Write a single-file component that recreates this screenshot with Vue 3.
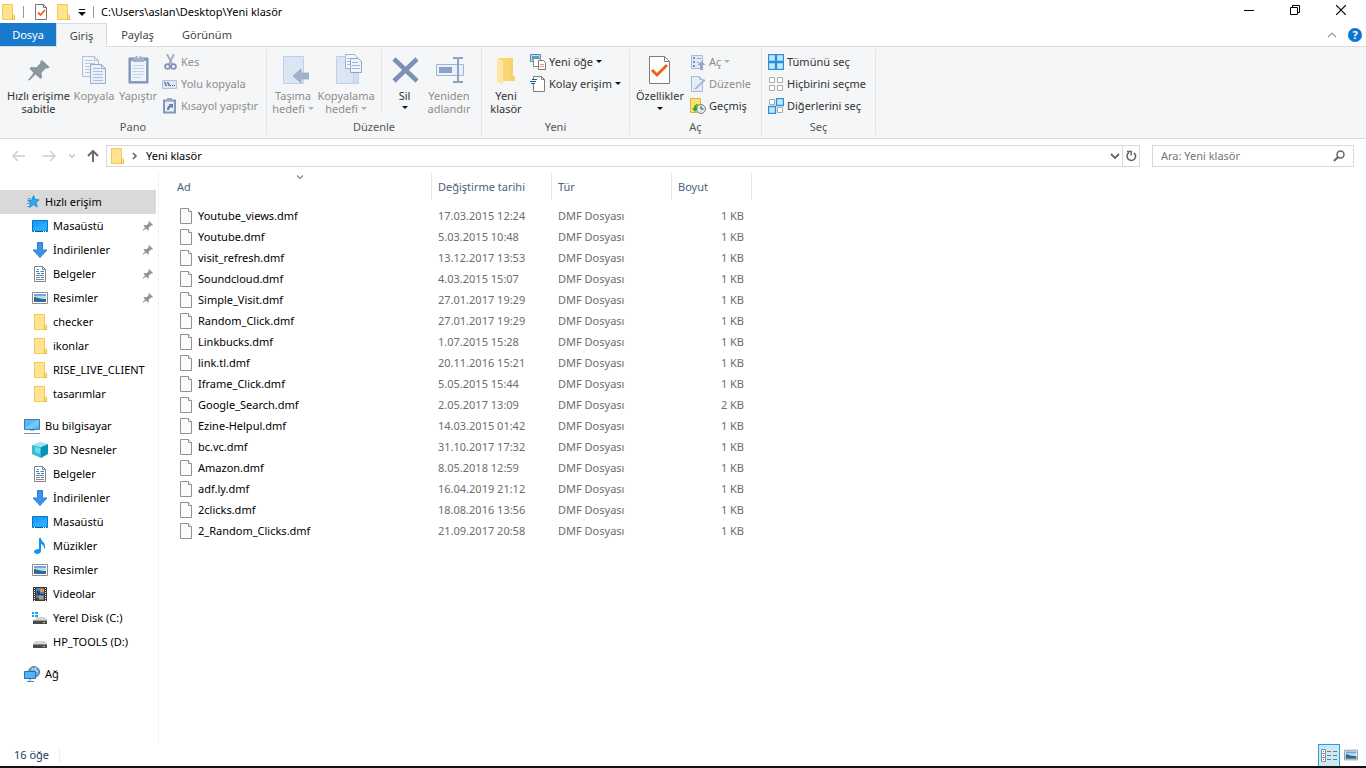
<script setup>
const quickAccess = [
  { icon: 'desktop', label: 'Masaüstü', pinned: true },
  { icon: 'download', label: 'İndirilenler', pinned: true },
  { icon: 'document', label: 'Belgeler', pinned: true },
  { icon: 'picture', label: 'Resimler', pinned: true },
  { icon: 'folder', label: 'checker' },
  { icon: 'folder', label: 'ikonlar' },
  { icon: 'folder', label: 'RISE_LIVE_CLIENT' },
  { icon: 'folder', label: 'tasarımlar' }
]

const computer = [
  { icon: 'cube', label: '3D Nesneler' },
  { icon: 'document', label: 'Belgeler' },
  { icon: 'download', label: 'İndirilenler' },
  { icon: 'desktop', label: 'Masaüstü' },
  { icon: 'music', label: 'Müzikler' },
  { icon: 'picture', label: 'Resimler' },
  { icon: 'video', label: 'Videolar' },
  { icon: 'sysdisk', label: 'Yerel Disk (C:)' },
  { icon: 'disk', label: 'HP_TOOLS (D:)' }
]

const sections = [
  { icon: 'star', label: 'Hızlı erişim', selected: true, items: quickAccess },
  { icon: 'computer', label: 'Bu bilgisayar', items: computer },
  { icon: 'network', label: 'Ağ', items: [] }
]

const files = [
  ['Youtube_views.dmf', '17.03.2015 12:24', '1 KB'],
  ['Youtube.dmf', '5.03.2015 10:48', '1 KB'],
  ['visit_refresh.dmf', '13.12.2017 13:53', '1 KB'],
  ['Soundcloud.dmf', '4.03.2015 15:07', '1 KB'],
  ['Simple_Visit.dmf', '27.01.2017 19:29', '1 KB'],
  ['Random_Click.dmf', '27.01.2017 19:29', '1 KB'],
  ['Linkbucks.dmf', '1.07.2015 15:28', '1 KB'],
  ['link.tl.dmf', '20.11.2016 15:21', '1 KB'],
  ['Iframe_Click.dmf', '5.05.2015 15:44', '1 KB'],
  ['Google_Search.dmf', '2.05.2017 13:09', '2 KB'],
  ['Ezine-Helpul.dmf', '14.03.2015 01:42', '1 KB'],
  ['bc.vc.dmf', '31.10.2017 17:32', '1 KB'],
  ['Amazon.dmf', '8.05.2018 12:59', '1 KB'],
  ['adf.ly.dmf', '16.04.2019 21:12', '1 KB'],
  ['2clicks.dmf', '18.08.2016 13:56', '1 KB'],
  ['2_Random_Clicks.dmf', '21.09.2017 20:58', '1 KB']
]

const groups = [
  {
    name: 'Pano', cls: 'g-pano',
    large: [
      { icon: 'bigpin', lines: ['Hızlı erişime', 'sabitle'], cls: 'w67' },
      { icon: 'copy', lines: ['Kopyala'], cls: 'w44', off: true },
      { icon: 'paste', lines: ['Yapıştır'], cls: 'w44', off: true }
    ],
    small: [
      { icon: 'cut', label: 'Kes', off: true },
      { icon: 'path', label: 'Yolu kopyala', off: true },
      { icon: 'pastelink', label: 'Kısayol yapıştır', off: true }
    ]
  },
  {
    name: 'Düzenle', cls: 'g-duzenle',
    large: [
      { icon: 'moveto', lines: ['Taşıma', 'hedefi'], arrow: 'inline', cls: 'w52', off: true },
      { icon: 'copyto', lines: ['Kopyalama', 'hedefi'], arrow: 'inline', cls: 'w54', off: true },
      { icon: 'delete', lines: ['Sil'], arrow: 'below', cls: 'w46 divided' },
      { icon: 'rename', lines: ['Yeniden', 'adlandır'], cls: 'w44', off: true }
    ],
    small: []
  },
  {
    name: 'Yeni', cls: 'g-yeni',
    large: [{ icon: 'bigfolder', lines: ['Yeni', 'klasör'], cls: 'w48' }],
    small: [
      { icon: 'newitem', label: 'Yeni öğe', arrow: true },
      { icon: 'easy', label: 'Kolay erişim', arrow: true }
    ]
  },
  {
    name: 'Aç', cls: 'g-ac',
    large: [{ icon: 'props', lines: ['Özellikler'], arrow: 'below', cls: 'w60' }],
    small: [
      { icon: 'open', label: 'Aç', arrow: true, off: true },
      { icon: 'edit', label: 'Düzenle', off: true },
      { icon: 'history', label: 'Geçmiş' }
    ]
  },
  {
    name: 'Seç', cls: 'g-sec',
    large: [],
    small: [
      { icon: 'selall', label: 'Tümünü seç' },
      { icon: 'selnone', label: 'Hiçbirini seçme' },
      { icon: 'selinv', label: 'Diğerlerini seç' }
    ]
  }
]
</script>

<template>
  <svg class="sprite" aria-hidden="true">
    <symbol id="i-folder" viewBox="-1 0 16 16">
      <path d="M1.500.5h10v11l2 1v3h-12z" fill="#ffe391" stroke="#f3cb52" />
      <path d="M11.500 15.500v-4l1-1 1 1v4z" fill="#ffe9a6" stroke="#e9bd3c" />
    </symbol>
    <symbol id="i-check" viewBox="0 0 16 16">
      <path d="M2.500.5h8l3 3v12h-11z" fill="#fff" stroke="#777" />
      <path d="M10.500.5v3h3" fill="none" stroke="#777" />
      <path d="M5 8.500l2.500 2.500 4.500-5" fill="none" stroke="#f1601f" stroke-width="1.800" />
    </symbol>
    <symbol id="i-file" viewBox="0 0 16 16">
      <path d="M2.500.5h8l3 3v12h-11z" fill="#fbfbfb" stroke="#929292" />
      <path d="M10.500.5v3h3" fill="#fff" stroke="#929292" />
    </symbol>
    <symbol id="i-star" viewBox="0 0 16 16">
      <path d="M9.500 1.500l1.600 4 4 .3-3.100 2.600 1.200 4.600-3.700-2.400-4 2.900 1.200-4.500-3-2.700 4.200-.3z" fill="#28a8f5" stroke="#1580d1" stroke-width=".8" />
      <path d="M4 4.500h3M3 9.500h3M3 12.500h2" stroke="#4b9fdb" stroke-width="1" />
    </symbol>
    <symbol id="i-desktop" viewBox="0 0 16 16">
      <path d="M.5 2.500h15v11h-15z" fill="#18a0fb" stroke="#0876c9" />
      <path d="M1 10L15 4v8H1z" fill="#4ab8ff" opacity=".4" />
      <path d="M1 13.500h14" stroke="#075a9c" /><path d="M2 13.500h1M11 13.500h1M13 13.500h1" stroke="#fff" />
    </symbol>
    <symbol id="i-download" viewBox="0 0 16 16">
      <path d="M5.500.5h5v7.500h4.500l-7 7.500-7-7.500h4.500z" fill="#3994e6" stroke="#2c7fcb" />
    </symbol>
    <symbol id="i-document" viewBox="0 0 16 16">
      <path d="M2.500.5h8l3 3v12h-11z" fill="#fff" stroke="#858585" />
      <path d="M10.500.5v3h3" fill="none" stroke="#858585" />
      <path d="M4 9.500h8M4 13.500h8M4 11.500h4" stroke="#888" />
      <path d="M5 3.500h2M4 5.500h3M8.500 5.500h3.500M9 7.500h3M5 7.500h3M9 11.500h3" stroke="#2684cf" />
    </symbol>
    <symbol id="i-picture" viewBox="0 0 16 16">
      <path d="M.5 2.500h15v11h-15z" fill="#fff" stroke="#8b8b8b" />
      <path d="M2 4h12v8H2z" fill="#b7dcf4" /><path d="M2 4h12v2H2z" fill="#6aa8e8" />
      <path d="M2 7c3 0 4 2 12 2v3H2z" fill="#366a75" /><path d="M2 10.500h12v1.500H2z" fill="#2c6cb0" />
    </symbol>
    <symbol id="i-computer" viewBox="0 0 16 16">
      <path d="M.5 1.500h15v10h-15z" fill="#58b8f4" stroke="#3c7fae" /><path d="M1 10L13 2h2v5L7 11H1z" fill="#8cd2fb" opacity=".6" />
      <path d="M6 12.500h4" stroke="#9bb" /><path d="M0 15.500h16" stroke="#6f93ac" />
    </symbol>
    <symbol id="i-network" viewBox="0 0 16 16">
      <circle cx="10" cy="6" r="5.500" fill="#6fa9ce" stroke="#4b7898" />
      <path d="M8 2l1 2M12 1l-1 3 3 2" stroke="#b5dcf0" stroke-width="1.500" fill="none" />
      <path d="M.5 5.500h11v7h-11z" fill="#52b5f5" stroke="#2673ad" /><path d="M3 15.500h7M6 13v2" stroke="#4e84aa" />
    </symbol>
    <symbol id="i-cube" viewBox="0 0 16 16">
      <path d="M0 3l8-3 8 2-7 3z" fill="#9fe5ef" /><path d="M0 3l9 2v11l-9-4z" fill="#35bdd2" /><path d="M9 5l7-3v10l-7 4z" fill="#0a8fb5" />
      <path d="M3 5l5 1v6l-5-2z" fill="#73d9e6" />
    </symbol>
    <symbol id="i-music" viewBox="0 0 16 16">
      <path d="M7 0h2c0 4 5 4 4 10l-1 1c0-4-1-4-3-5v7c0 2-2 3-4 3s-3-1-3-2.500S4 11 7 11z" fill="#1793ec" />
    </symbol>
    <symbol id="i-video" viewBox="0 0 16 16">
      <path d="M1 1h14v14H1z" fill="#3a3a3a" /><path d="M4 2h8v6H4zM4 9h8v5H4z" fill="#4a7fd0" />
      <path d="M8 3h4v3H8zM7 10h4v3H7z" fill="#d99b2b" /><path d="M5 5h3v3H5zM4 12h3v2H4z" fill="#304c37" />
      <path d="M2.500 2v13M13.500 2v13" stroke="#eee" stroke-dasharray="1 1" />
    </symbol>
    <symbol id="i-disk" viewBox="0 0 16 16">
      <path d="M3 7h10l2 3H1z" fill="#d6d6d6" /><path d="M1 10h14v4H1z" fill="#4a4a4a" /><path d="M1 10.500h14" stroke="#8c8c8c" /><path d="M11 12.500h2" stroke="#72ec61" />
    </symbol>
    <symbol id="i-sysdisk" viewBox="0 0 16 16">
      <path d="M5 7h8l2 3H2z" fill="#d6d6d6" /><path d="M1 10h14v4H1z" fill="#4a4a4a" /><path d="M1 10.500h14" stroke="#999" /><path d="M11 12.500h2" stroke="#72ec61" />
      <path d="M0 2h2v2H0zM3 2h3v2H3zM0 5h2v2H0zM3 5h3v2H3z" fill="#16a4f5" />
    </symbol>
    <symbol id="i-pin" viewBox="0 0 12 12">
      <path d="M7 1l4 4-1 .8-1-.3L7 7.500l-.3 2.500-.7.500L4 8.500 1 11l-.5-.5L3 7.500 1.500 5.500l.8-.6 2.500.1L6.800 3 6.400 2z" fill="#8c979f" />
    </symbol>
    <symbol id="i-bigpin" viewBox="0 0 32 32">
      <path d="M19 6l7.500 7-1.500 1.500-2-.3-4.500 4.500.5 4.800-1.500 1.500-5-4.500-6 6-1.500-.5 5.500-7-4-4.500 1.500-1.500 5.500.3 4-4.300-.2-1.800z" fill="#8b979e" />
    </symbol>
    <symbol id="i-copy" viewBox="0 0 32 32">
      <path d="M4.500 2.500h12l4 4v16h-16z" fill="#f1f5fb" stroke="#aebfd9" /><path d="M16.500 2.500v4h4" fill="none" stroke="#aebfd9" />
      <path d="M7 6.500h8M7 9.500h10M7 12.500h10M7 15.500h8M7 18.500h8" stroke="#b5c8e0" />
      <path d="M12.500 10.500h11l4 4v15h-15z" fill="#e9f0f9" stroke="#97acc9" /><path d="M23.500 10.500v4h4" fill="none" stroke="#97acc9" />
      <path d="M15 14.500h7M15 17.500h10M15 20.500h10M15 23.500h10M15 26.500h10" stroke="#abc0dc" />
    </symbol>
    <symbol id="i-paste" viewBox="0 0 32 32">
      <path d="M7 4h19v25H7z" fill="#8ba0be" stroke="#7890b2" /><path d="M9 7h15v20H9z" fill="#edf3fa" />
      <path d="M11 4h2l1-2h5l1 2h2v4H11z" fill="#a5b1c3" /><circle cx="16.500" cy="3" r="1" fill="#fff" />
      <path d="M11 11.500h11M11 14.500h11M11 17.500h11M11 20.500h11M11 23.500h8" stroke="#c4d3e6" />
    </symbol>
    <symbol id="i-cut" viewBox="0 0 16 16">
      <path d="M5 0l5 10M12 0L7 10" stroke="#9cacc3" stroke-width="1.700" /><circle cx="5.500" cy="12.500" r="2.400" fill="none" stroke="#8195b5" stroke-width="1.800" /><circle cx="11.500" cy="12.500" r="2.400" fill="none" stroke="#8195b5" stroke-width="1.800" />
    </symbol>
    <symbol id="i-path" viewBox="0 0 16 16">
      <path d="M.5 4.500h14v8H.5z" fill="#dce7f4" stroke="#afc0d8" /><path d="M2.500 6l2 4M5.500 6l2 4" stroke="#536b90" stroke-width="1.300" /><path d="M8 9.500h1M10 9.500h1M12 9.500h1" stroke="#536b90" />
    </symbol>
    <symbol id="i-pastelink" viewBox="0 0 16 16">
      <path d="M2 2.500h11v12H2z" fill="#e6eef8" stroke="#8499b9" stroke-width="2" /><path d="M5 0h5v3H5z" fill="#9aa9bf" />
      <path d="M5 12c0-3 1-4 3-5L6.500 6H11v4.500L9.500 9C7.500 10 7 11 7 12z" fill="#677fa8" />
    </symbol>
    <symbol id="i-moveto" viewBox="0 0 32 32">
      <path d="M6.500 2.500h20v27h-20z" fill="#dbe6f4" stroke="#c0d0e6" /><path d="M16 22l8-7v4h8v6h-8v4z" fill="#9fb1cb" stroke="#93a7c4" stroke-width=".7" />
    </symbol>
    <symbol id="i-copyto" viewBox="0 0 32 32">
      <path d="M6.500 2.500h17v27h-17z" fill="#dbe6f4" stroke="#c0d0e6" /><path d="M23.500 18.500h5v11h-5z" fill="#d0def0" stroke="#c0d0e6" />
      <path d="M15.500.5h9l3 3v11h-12z" fill="#f3f7fc" stroke="#9fb1cb" /><path d="M20.500 4.500h8l3 3v11h-11z" fill="#eff5fc" stroke="#8fa4c3" />
      <path d="M17 4.500h3M17 7.500h3M17 10.500h3M22 8.500h6M22 11.500h8M22 14.500h8" stroke="#a4b8d4" />
    </symbol>
    <symbol id="i-delete" viewBox="0 0 32 32">
      <path d="M5 5l23 22M28 5L5 27" stroke="#7d91b3" stroke-width="4.500" />
    </symbol>
    <symbol id="i-rename" viewBox="0 0 32 32">
      <path d="M3.500 10.500h27v11h-27z" fill="#e9f2fb" stroke="#9fb5d3" /><path d="M6 13h13v6H6z" fill="#8ba2c4" />
      <path d="M20 4h4l1 1 1-1h4M25 5v22M20 28h4l1-1 1 1h4" fill="none" stroke="#8da3c5" stroke-width="2" />
    </symbol>
    <symbol id="i-bigfolder" viewBox="0 0 32 32">
      <path d="M7 4h16v18l2 1v4H7z" fill="#f8d677" /><path d="M7 4l6 3v23.500L7 28z" fill="#ffe7a2" /><path d="M20 5h3v17l2 1v4h-5z" fill="#f9d267" />
    </symbol>
    <symbol id="i-newitem" viewBox="0 0 16 16">
      <path d="M.5.5h10v7H.5z" fill="#bcdef2" stroke="#528caf" /><path d="M2 2h7v4H2z" fill="#5a9fc9" />
      <path d="M3.500 4.500h7v8h-7z" fill="#fff" stroke="#8c8c8c" /><path d="M8.500 6.500h5l2 2v7h-7z" fill="#fff" stroke="#777" /><path d="M10 10.500h4M10 12.500h4" stroke="#e59783" />
    </symbol>
    <symbol id="i-easy" viewBox="0 0 16 16">
      <path d="M3.500 3V.5h8l3 3v12h-11V8" fill="#fff" stroke="#7d7d7d" /><path d="M11.500.5v3h3" fill="none" stroke="#7d7d7d" />
      <path d="M2 3.500h5M0 5.500h6M1 7.500h4" stroke="#1d5c96" />
    </symbol>
    <symbol id="i-props" viewBox="0 0 32 32">
      <path d="M5.500 2.500h15l5 5v22h-20z" fill="#fff" stroke="#7b7b7b" /><path d="M20.500 2.500v5h5" fill="none" stroke="#7b7b7b" />
      <path d="M8 16l5 5 10-10" fill="none" stroke="#f2601c" stroke-width="3" />
    </symbol>
    <symbol id="i-open" viewBox="0 0 16 16">
      <path d="M1.500 1.500h11v13h-11z" fill="#e1eaf5" stroke="#a8bad3" /><path d="M3 3h2v2H3zM3 7h2v2H3zM3 11h2v2H3z" fill="#718aaf" /><path d="M7 4.500h4M7 8.500h2" stroke="#91a6c4" />
      <path d="M11.500 7l4 4h-2.500v5h-3v-5H7.500z" fill="#93a6c3" />
    </symbol>
    <symbol id="i-edit" viewBox="0 0 16 16">
      <path d="M1.500.5h8l3 3v12h-11z" fill="#e5edf8" stroke="#a8bad3" /><path d="M9.500.5v3h3" fill="none" stroke="#a8bad3" /><path d="M4 13l10-10 1.500 1.500-9.500 9z" fill="#a5b7d0" />
    </symbol>
    <symbol id="i-history" viewBox="0 0 16 16">
      <path d="M.5.5h10v14H.5z" fill="#ffe078" stroke="#dfb537" /><circle cx="11" cy="11" r="4.500" fill="#e4e9ec" stroke="#818181" />
      <path d="M11 8v3h2.500" fill="none" stroke="#444" /><path d="M2 10h2c0-3 2-4 5-4-2 1-2.500 2-2.500 4H8l-3 4z" fill="#28aa32" />
    </symbol>
    <symbol id="i-selall" viewBox="0 0 16 16">
      <path d="M.5.500h7v7h-7zM8.500.500h7v7h-7zM.5 8.500h7v7h-7zM8.500 8.500h7v7h-7z" fill="#c6e6fc" stroke="#2a91e0" stroke-width="1.400" />
    </symbol>
    <symbol id="i-selnone" viewBox="0 0 16 16">
      <path d="M1.500 1.500h5v5h-5zM9.500 1.500h5v5h-5zM1.500 9.500h5v5h-5zM9.500 9.500h5v5h-5z" fill="#fff" stroke="#aaa" />
    </symbol>
    <symbol id="i-selinv" viewBox="0 0 16 16">
      <path d="M1.500 1.500h5v5h-5zM9.500 9.500h5v5h-5z" fill="#fff" stroke="#aaa" /><path d="M8.500.5h7v7h-7zM.5 8.500h7v7h-7z" fill="#c6e6fc" stroke="#2a91e0" stroke-width="1.400" />
    </symbol>
    <symbol id="i-details" viewBox="0 0 18 14">
      <path d="M1.500.5h4v4h-4zM1.500 4.500h4v4h-4zM1.500 8.500h4v4h-4z" fill="#fff" stroke="#8b8b8b" /><path d="M3 2.500h1M3 6.500h1" stroke="#3674a8" /><path d="M3 10.500h1" stroke="#d33" />
      <path d="M7 2.500h4M13 2.500h4M7 6.500h4M13 6.500h4M7 10.500h4M13 10.500h4" stroke="#777" />
    </symbol>
    <symbol id="i-caret" viewBox="0 0 6 4"><path d="M0 0h6L3 3z" fill="currentColor" /></symbol>
    <symbol id="i-chevron" viewBox="0 0 8 8"><path d="M1 2.500l3 3 3-3" fill="none" stroke="currentColor" stroke-width="1.200" /></symbol>
  </svg>

  <div class="window">
    <header class="titlebar">
      <svg class="ic16"><use href="#i-folder" /></svg>
      <i class="bar"></i>
      <button class="quick q-check" aria-label="Özellikler"><svg class="ic16"><use href="#i-check" /></svg></button>
      <button class="quick q-new" aria-label="Yeni klasör"><svg class="ic16"><use href="#i-folder" /></svg></button>
      <button class="quick q-more" aria-label="Hızlı Erişim Araç Çubuğunu Özelleştir">
        <svg width="8" height="7" viewBox="0 0 8 7"><path d="M1 .5h6" stroke="#111" /><path d="M0 3h8L4 7z" fill="#111" /></svg>
      </button>
      <i class="bar"></i>
      <h1 class="title">C:\Users\aslan\Desktop\Yeni klasör</h1>
      <div class="winbtns">
        <button aria-label="Simge durumuna küçült"><svg width="10" height="10"><path d="M0 5.500h10" stroke="#000" /></svg></button>
        <button aria-label="Önceki boyut"><svg width="10" height="10"><path d="M.5 2.500h7v7h-7zM2.500 2.500v-2h7v7h-2" fill="none" stroke="#000" /></svg></button>
        <button aria-label="Kapat"><svg width="10" height="10"><path d="M0 0l10 10M10 0L0 10" stroke="#000" stroke-width="1.200" /></svg></button>
      </div>
    </header>

    <nav class="tabs">
      <button class="tab file">Dosya</button>
      <button class="tab active">Giriş</button>
      <button class="tab share">Paylaş</button>
      <button class="tab view">Görünüm</button>
      <button class="collapse" aria-label="Şeridi simge durumuna küçült"><svg width="10" height="6"><path d="M1 5l4-4 4 4" fill="none" stroke="#999" stroke-width="1.200" /></svg></button>
      <button class="help" aria-label="Yardım">?</button>
    </nav>

    <section class="ribbon">
      <div v-for="g in groups" :key="g.name" class="group" :class="g.cls">
        <div class="tools">
          <button v-for="b in g.large" :key="b.icon" class="large" :class="[b.cls, { off: b.off }]">
            <svg class="ic32"><use :href="'#i-' + b.icon" /></svg>
            <span v-for="(line, n) in b.lines" :key="line" class="line">{{ line }}<svg v-if="b.arrow === 'inline' && n === 1" class="caret"><use href="#i-caret" /></svg></span>
            <span v-if="b.arrow === 'below'" class="line"><svg class="caret solo"><use href="#i-caret" /></svg></span>
          </button>
          <div v-if="g.small.length" class="stack">
            <button v-for="b in g.small" :key="b.icon" class="small" :class="{ off: b.off }">
              <svg class="ic16"><use :href="'#i-' + b.icon" /></svg>
              <span>{{ b.label }}</span>
              <svg v-if="b.arrow" class="caret"><use href="#i-caret" /></svg>
            </button>
          </div>
        </div>
        <div class="gname">{{ g.name }}</div>
      </div>
    </section>

    <div class="address">
      <button class="nav back" aria-label="Geri"><svg width="14" height="12"><path d="M13 6H1M6 1L1 6l5 5" fill="none" stroke="#ccc" stroke-width="1.400" /></svg></button>
      <button class="nav fwd" aria-label="İleri"><svg width="14" height="12"><path d="M1 6h12M8 1l5 5-5 5" fill="none" stroke="#ccc" stroke-width="1.400" /></svg></button>
      <button class="nav recent" aria-label="Son konumlar"><svg class="chev"><use href="#i-chevron" /></svg></button>
      <button class="nav up" aria-label="Yukarı"><svg width="12" height="14"><path d="M6 13V2M1 7l5-5 5 5" fill="none" stroke="#6b6b6b" stroke-width="2" /></svg></button>
      <div class="crumbs">
        <svg class="ic16"><use href="#i-folder" /></svg>
        <svg class="sep" width="6" height="8"><path d="M1 1l3 3-3 3" fill="none" stroke="#666" stroke-width="1.600" /></svg>
        <button class="crumb">Yeni klasör</button>
        <button class="drop" aria-label="Önceki konumlar"><svg width="10" height="8"><path d="M1 2l4 4 4-4" fill="none" stroke="#666" stroke-width="1.800" /></svg></button>
        <button class="reload" aria-label="Yenile"><svg width="12" height="12"><path d="M4 2.500A4.300 4.300 0 1 0 9 2.800" fill="none" stroke="#666" stroke-width="1.600" /><path d="M2 1.500h4.200v4" fill="none" stroke="#666" stroke-width="1.400" /></svg></button>
      </div>
      <label class="search">
        <input type="search" placeholder="Ara: Yeni klasör" aria-label="Ara: Yeni klasör" />
        <svg width="12" height="12"><circle cx="7.500" cy="4.500" r="3.500" fill="none" stroke="#666" stroke-width="1.500" /><path d="M5 7L1 11" stroke="#666" stroke-width="2" /></svg>
      </label>
    </div>

    <main class="body">
      <aside class="side">
        <div v-for="s in sections" :key="s.label" class="section">
          <a href="#" class="node" :class="{ selected: s.selected }"><svg class="ic16"><use :href="'#i-' + s.icon" /></svg>{{ s.label }}</a>
          <a v-for="n in s.items" :key="n.label" href="#" class="node child">
            <svg class="ic16"><use :href="'#i-' + n.icon" /></svg>{{ n.label }}
            <svg v-if="n.pinned" class="pin"><use href="#i-pin" /></svg>
          </a>
        </div>
      </aside>
      <div class="list">
        <table>
          <thead>
            <tr>
              <th class="c-name">Ad<svg class="sort"><use href="#i-chevron" /></svg></th>
              <th class="c-date">Değiştirme tarihi</th>
              <th class="c-type">Tür</th>
              <th class="c-size">Boyut</th>
            </tr>
          </thead>
          <tbody>
            <tr v-for="f in files" :key="f[0]">
              <td class="first"><div class="fname"><svg class="ic16"><use href="#i-file" /></svg>{{ f[0] }}</div></td>
              <td>{{ f[1] }}</td>
              <td>DMF Dosyası</td>
              <td class="num">{{ f[2] }}</td>
            </tr>
          </tbody>
        </table>
      </div>
    </main>

    <footer class="status">
      <span class="count">16 öğe</span>
      <button class="mode on" aria-label="Ayrıntılar"><svg width="18" height="14"><use href="#i-details" /></svg></button>
      <button class="mode" aria-label="Büyük simgeler"><svg width="14" height="14"><use href="#i-picture" /></svg></button>
    </footer>
  </div>
</template>

<style>
body { background: #fff; }
</style>

<style scoped>
.sprite { position: absolute; width: 0; height: 0; }
.window {
  display: flex; flex-direction: column; min-height: 100vh; box-sizing: border-box;
  border-bottom: 2px solid #111; background: #fff; color: #000;
  font-family: "Noto Sans", "Open Sans", sans-serif; font-size: 11px; line-height: 16px;
}
button { border: 0; padding: 0; margin: 0; background: none; font: inherit; color: inherit; white-space: nowrap; }
svg { display: block; flex: none; }
.ic16 { width: 16px; height: 16px; }
.ic32 { width: 32px; height: 32px; }
.caret { width: 6px; height: 4px; }

.titlebar { display: flex; align-items: center; height: 23px; }
.bar { width: 1px; height: 12px; background: #999; margin-left: 7px; }
.q-check { margin-left: 9px; }
.q-new { margin-left: 6px; }
.q-more { margin: 2px 0 0 7px; }
.title { flex: 1; margin: 0 0 0 7px; font-size: 11px; font-weight: 400; white-space: nowrap; }
.winbtns { display: flex; align-self: flex-start; padding-right: 2px; }
.winbtns button { display: flex; justify-content: center; align-items: center; width: 46px; height: 20px; }

.tabs { display: flex; height: 23px; border-bottom: 1px solid #dadbdc; color: #444; }
.tab { height: 23px; }
.file { width: 56px; background: #1979ca; color: #fff; }
.active { width: 51px; height: 24px; box-sizing: border-box; border: 1px solid #dadbdc; border-bottom: 0; background: #f5f6f7; }
.share { width: 61px; }
.view { width: 78px; }
.collapse { margin-left: auto; width: 10px; }
.help { align-self: center; width: 14px; height: 14px; margin: 0 4px 0 11px; border-radius: 50%; background: #0b76d1; color: #fff; font-size: 11px; font-weight: 700; line-height: 14px; }

.ribbon { display: flex; height: 91px; border-bottom: 1px solid #dadbdc; background: #f5f6f7; color: #333; }
.group { display: flex; flex-direction: column; box-sizing: border-box; height: 86px; margin-top: 2px; border-right: 1px solid #e2e3e4; }
.g-pano { width: 267px; }
.g-pano .tools { padding-left: 5px; }
.g-duzenle { width: 215px; }
.g-yeni { width: 148px; }
.g-ac { width: 132px; }
.g-sec { width: 114px; }
.g-sec .tools { padding-left: 6px; }
.tools { display: flex; height: 73px; }
.gname { text-align: center; line-height: 16px; color: #555; }
.large { display: flex; flex-direction: column; align-items: center; padding-top: 5px; }
.large .ic32 { margin-bottom: 3px; }
.line { display: flex; align-items: center; gap: 3px; line-height: 13px; height: 13px; }
.off { color: #8d8d8d; }
.caret { color: #111; }
.off .caret { color: #b0b0b0; }
.w67 { width: 67px; }
.w44 { width: 44px; }
.w46 { width: 46px; }
.w48 { width: 48px; }
.w52 { width: 52px; }
.w54 { width: 54px; }
.w60 { width: 60px; }
.divided { margin-left: 8px; border-left: 1px solid #e2e3e4; height: 64px; }
.stack { padding: 2px 0 0; }
.g-pano .stack { padding-left: 2px; }
.small { display: flex; align-items: center; gap: 3px; height: 22px; }

.address { display: flex; align-items: center; height: 34px; padding: 0 12px; }
.nav { display: flex; align-items: center; }
.fwd { margin-left: 16px; }
.recent { margin-left: 12px; color: #bbb; }
.up { margin-left: 11px; }
.chev { width: 8px; height: 8px; }
.crumbs { flex: 1; display: flex; align-items: center; height: 20px; margin-left: 7px; padding-left: 2px; border: 1px solid #d9d9d9; }
.sep { margin-left: 7px; }
.crumb { margin-left: 8px; }
.drop { margin-left: auto; margin-right: 2px; }
.reload { display: flex; align-items: center; justify-content: center; width: 17px; height: 20px; border-left: 1px solid #d9d9d9; }
.search { display: flex; align-items: center; width: 200px; height: 20px; margin-left: 12px; border: 1px solid #d9d9d9; }
.search input { flex: 1; min-width: 0; border: 0; padding: 0 0 0 8px; outline: 0; background: none; font: inherit; }
.search input::placeholder { color: #767676; opacity: 1; }
.search svg { margin-right: 8px; }

.body { flex: 1; display: flex; }
.side { width: 159px; padding-top: 17px; box-sizing: border-box; border-right: 1px solid #f2f2f2; }
.section { margin-bottom: 8px; }
.node { display: flex; align-items: center; gap: 5px; height: 24px; margin-right: 2px; padding-left: 24px; color: #000; text-decoration: none; white-space: nowrap; }
.child { padding-left: 32px; }
.selected { background: #d9d9d9; }
.pin { width: 12px; height: 12px; margin: 0 2px 0 auto; }
.list { flex: 1; padding: 0 0 0 12px; }
table { border-collapse: separate; border-spacing: 0; table-layout: fixed; width: 581px; }
th { box-sizing: border-box; height: 27px; padding: 0 0 0 6px; border-right: 1px solid #e5e5e5; text-align: left; font-weight: 400; color: #4c607a; white-space: nowrap; position: relative; }
.c-name { width: 261px; }
.c-date, .c-type { width: 120px; }
.c-size { width: 80px; }
.sort { position: absolute; left: 48%; top: 0; width: 8px; height: 8px; color: #888; }
td { height: 21px; padding: 0 0 0 6px; color: #6d6d6d; white-space: nowrap; }
.first { padding-left: 7px; }
tbody::before { content: ""; display: block; height: 5px; }
.fname { display: flex; align-items: center; gap: 4px; color: #000; }
.num { padding-right: 8px; text-align: right; }

.status { display: flex; align-items: center; height: 22px; padding-left: 14px; padding-right: 4px; color: #1e395b; }
.count { width: 45px; margin-right: auto; border-right: 1px solid #eee; }
.mode { display: flex; align-items: center; justify-content: center; width: 22px; height: 22px; box-sizing: border-box; }
.on { border: 1px solid #26a0da; border-bottom: 0; background: #cbe8f6; }
</style>
